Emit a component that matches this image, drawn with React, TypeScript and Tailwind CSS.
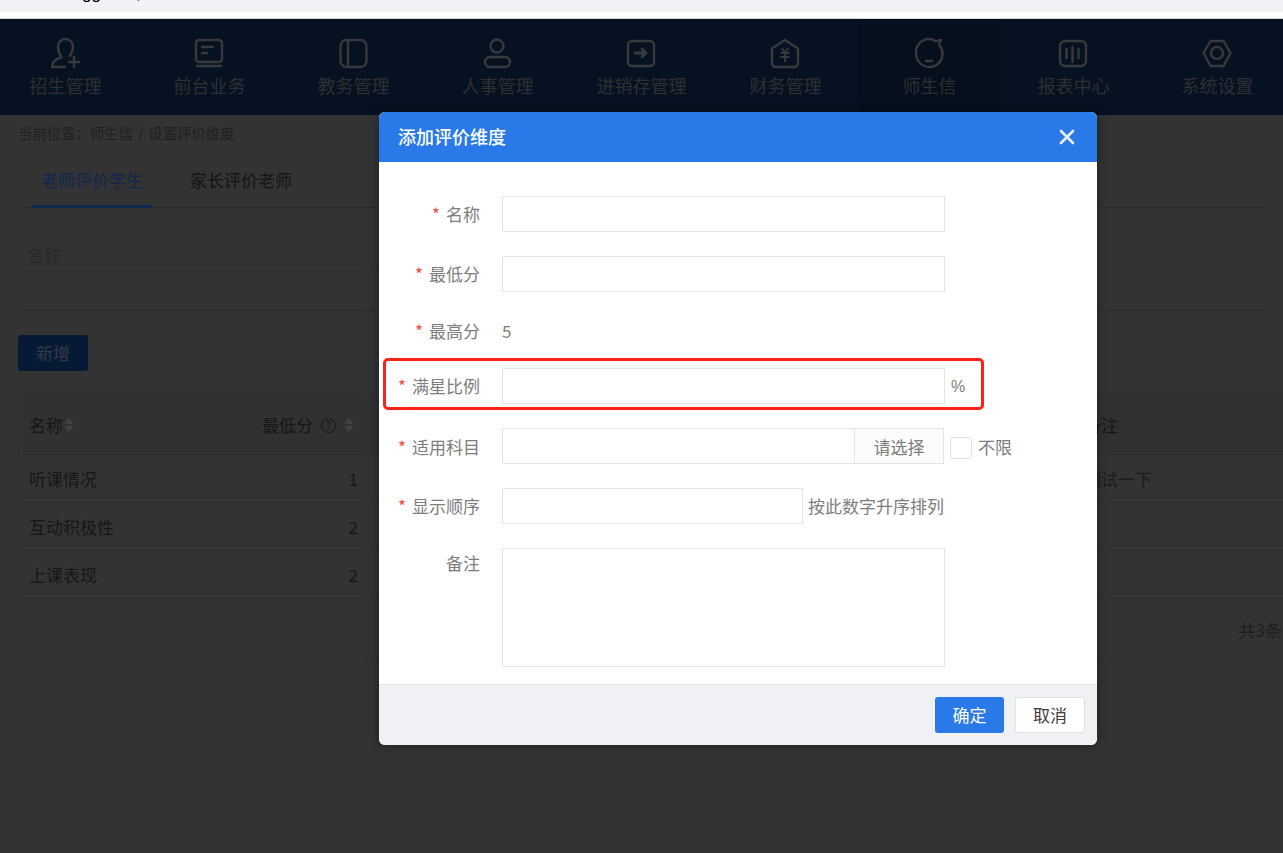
const font = { fontFamily: '"Noto Sans CJK SC", "Liberation Sans", sans-serif' };

const S = "fill-none stroke-[#38393b] stroke-[2.4]";
const B = "fill-none stroke-[#38393b] stroke-[2]";
const icons: Record<string, JSX.Element> = {
  a: (<g className={S} strokeLinecap="round" strokeLinejoin="round"><path d="M13 21C10.500 18 10 14.500 10 12 10 7.200 13 4 17.500 4S25 7.200 25 12c0 3-1 6-3 9" /><path d="M13 21v1.500C8 24 4 27 4 32h13" /><path d="M26 22v10M21 27h10" /></g>),
  b: (<g className={S} strokeLinecap="round" strokeLinejoin="round"><rect x="4" y="5" width="26" height="22" rx="3" /><path d="M10 12h11M10 18h5M5 31h24" /></g>),
  c: (<g className={S}><rect x="4.500" y="5" width="26" height="27" rx="6" /><path d="M12 5v27" /></g>),
  d: (<g className={S}><circle cx="17" cy="11" r="6.500" /><rect x="5" y="22" width="25" height="10" rx="5" /></g>),
  e: (<g strokeLinecap="round" strokeLinejoin="round"><rect x="4" y="6" width="26" height="25" rx="4" className={S} /><path d="M11 18h11M18 14l4 4-4 4" className="fill-none stroke-[#38393b] stroke-[2.800]" /></g>),
  f: (<g><path d="M17 5l13 8.500V28a4 4 0 0 1-4 4H8a4 4 0 0 1-4-4V13.500z" className={S} strokeLinejoin="round" /><path d="M13.500 13l3.500 4.500 3.500-4.500M12.500 18h9M12.500 22h9M17 17.500V27" className={B} /></g>),
  g: (<g className={S} strokeLinecap="round" strokeLinejoin="round"><path d="M27 9.500c2.500 3 3.500 6 3.500 9 0 7.500-5.500 13.500-13 13.500S4 26 4 18 9.500 4 17 4c2.500 0 5 .8 6.500 2.200L29 5z" /><path d="M14 26h6" /></g>),
  h: (<g className={S} strokeLinecap="round"><rect x="4" y="6" width="26" height="25" rx="5" /><path d="M10.500 14v9M16.500 12v15M22.500 14v9" /></g>),
  i: (<g className={S} strokeLinejoin="round"><path d="M10.500 6h13L30.500 18l-7 13h-13L3.500 18z" /><circle cx="17" cy="18" r="6" /></g>),
};

const nav: [string, string][] = [
  ["招生管理", "a"], ["前台业务", "b"], ["教务管理", "c"], ["人事管理", "d"], ["进销存管理", "e"],
  ["财务管理", "f"], ["师生信", "g"], ["报表中心", "h"], ["系统设置", "i"],
];

function Sort() {
  return (
    <span className="flex flex-col gap-[2px] ml-[1px]">
      <span className="w-0 h-0 border-x-[5px] border-x-transparent border-b-[6px] border-b-[#424242]" />
      <span className="w-0 h-0 border-x-[5px] border-x-transparent border-t-[6px] border-t-[#424242]" />
    </span>
  );
}

function Label({ text, req = true, mt = "" }: { text: string; req?: boolean; mt?: string }) {
  return (
    <div className={`w-[101px] shrink-0 text-right text-[17px] leading-[24px] text-[#7d7d7d] ${mt}`}>
      {req && <span className="text-[#f5483b] mr-[6px]">*</span>}
      {text}
    </div>
  );
}

const inputCls = "h-[36px] border border-[#e3e4e6] bg-white";

export default function App() {
  return (
    <div style={font} className="relative w-[1283px] h-[853px] overflow-hidden bg-[#333333]">
      <div className="h-[12px] bg-[#f0f2f5] overflow-hidden relative">
        <span className="absolute left-[82px] top-[-17px] text-[17px] leading-[22px] text-black font-['Liberation_Sans']">gg</span>
        <span className="absolute left-[136px] top-[-17px] text-[17px] leading-[22px] text-[#333] font-['Liberation_Sans']">,</span>
      </div>
      <div className="h-[7px] bg-white border-b border-[#d9d9d9]" />

      <nav className="h-[96px] bg-[#061222] flex justify-center">
        {nav.map(([t, k]) => (
          <div key={t} className={`w-[144px] h-[91px] shrink-0 flex flex-col items-center pt-[16px] ${t === "师生信" ? "bg-[#050f1d]" : ""}`}>
            <svg width="36" height="36" viewBox="0 0 36 36">{icons[k]}</svg>
            <span className="text-[18px] leading-[26px] mt-[1px] text-[#2e2f31]">{t}</span>
          </div>
        ))}
      </nav>

      <main className="px-[18px]">
        <div className="text-[14.4px] leading-[20px] pt-[8px] text-[#202020]">当前位置：师生信<span className="mx-[1.500px]"> / </span>设置评价维度</div>
        <div className="flex mt-[21px] h-[44px] border-b border-[#2b2b2b] pl-[14px] text-[17px]">
          <div className="w-[120px] h-[44px] text-center leading-[32px] text-[#10284f] border-b-[3px] border-[#10284f]">老师评价学生</div>
          <div className="w-[178px] text-center leading-[32px] text-[#141414]">家长评价老师</div>
        </div>
        <div className="h-[103px] border-b border-[#2b2b2b] pt-[30px] pl-[5px]">
          <div className="w-[360px] h-[34px] border-b border-[#2e2e2e] pl-[4px] text-[17px] leading-[34px] text-[#282828]">名称</div>
        </div>
        <button className="block mt-[24px] w-[70px] h-[36px] rounded-[3px] bg-[#061a36] text-[17px] text-[#333a44]">新增</button>

        <div className="mt-[24px] w-[1280px] h-[266px] border border-[#2d2d2d] text-[17px] text-[#161616]">
          <div className="h-[59px] bg-[#313131] border-b border-[#2d2d2d] flex items-center pl-[10px]">
            <div className="w-[233px] flex items-center">名称<Sort /></div>
            <div className="flex items-center">
              最低分
              <span className="ml-[8px] w-[15px] h-[15px] rounded-full border border-[#161616] text-[11px] leading-[13px] text-center">?</span>
              <span className="ml-[7px]"><Sort /></span>
            </div>
            <div className="ml-auto w-[213px]">备注</div>
          </div>
          {[["听课情况", "1", "测试一下"], ["互动积极性", "2", ""], ["上课表现", "2", ""]].map(([a, b, c]) => (
            <div key={a} className="h-[48px] border-b border-[#2d2d2d] flex items-center pl-[10px]">
              <div className="w-[319px]">{a}</div>
              <div className="w-[10px] text-right">{b}</div>
              <div className="ml-auto w-[213px] text-[#1c1c1c]">{c}</div>
            </div>
          ))}
          <div className="h-[62px] flex items-center justify-end text-[#1e1e1e] pr-[15px]">共3条</div>
        </div>
      </main>

      <div className="absolute left-[379px] top-[112px] w-[718px] h-[633px] rounded-[6px] overflow-hidden bg-white flex flex-col shadow-[0_0_12px_rgba(0,0,0,0.4)]">
        <div className="h-[50px] shrink-0 bg-[#2a79e8] flex items-center justify-between pl-[19px] pr-[22px] pb-[1px]">
          <span className="text-[18px] font-medium text-white">添加评价维度</span>
          <svg width="16" height="16" viewBox="0 0 16 16"><path d="M2 2l12 12M14 2L2 14" stroke="#e8f0fc" strokeWidth="2.600" strokeLinecap="round" /></svg>
        </div>

        <div className="flex-1 pt-[34px]">
          <div className="flex pb-[24px]">
            <Label text="名称" mt="mt-[6px]" />
            <div className={`${inputCls} w-[443px] ml-[22px]`} />
          </div>
          <div className="flex pb-[24px]">
            <Label text="最低分" mt="mt-[6px]" />
            <div className={`${inputCls} w-[443px] ml-[22px]`} />
          </div>
          <div className="flex h-[52px]">
            <Label text="最高分" mt="mt-[3px]" />
            <div className="ml-[22px] mt-[3px] text-[17px] leading-[24px] text-[#7d7d7d]">5</div>
          </div>
          <div className="flex pb-[24px]">
            <Label text="满星比例" mt="mt-[6px]" />
            <div className={`${inputCls} w-[443px] ml-[22px]`} />
            <span className="ml-[6px] text-base leading-[38px] h-[36px] text-[#7d7d7d] font-['Liberation_Sans']">%</span>
          </div>
          <div className="flex pb-[24px]">
            <Label text="适用科目" mt="mt-[7px]" />
            <div className={`${inputCls} w-[442px] ml-[22px] flex justify-end`}>
              <div className="w-[89px] bg-[#fcfcfc] border-l border-[#e3e4e6] text-center text-[17px] leading-[36px] text-[#7d7d7d]">请选择</div>
            </div>
            <span className="ml-[6px] mt-[9px] w-[22px] h-[22px] rounded-[3px] border border-[#dfe2e8]" />
            <span className="ml-[6px] text-[17px] leading-[38px] h-[36px] text-[#7d7d7d]">不限</span>
          </div>
          <div className="flex pb-[24px]">
            <Label text="显示顺序" mt="mt-[6px]" />
            <div className={`${inputCls} w-[301px] ml-[22px]`} />
            <span className="ml-[5px] text-[17px] leading-[36px] h-[36px] text-[#7d7d7d]">按此数字升序排列</span>
          </div>
          <div className="flex">
            <Label text="备注" req={false} mt="mt-[3px]" />
            <div className="h-[119px] w-[443px] ml-[22px] border border-[#e3e4e6]" />
          </div>
        </div>

        <div className="h-[61px] shrink-0 bg-[#f0f1f5] border-t border-[#e3e4e8] flex items-center justify-end gap-[11px] pr-[12px] pb-[1px]">
          <button className="w-[69px] h-[36px] rounded-[3px] bg-[#2a79e8] text-[17px] text-white">确定</button>
          <button className="w-[70px] h-[36px] rounded-[3px] bg-white border border-[#dfe1e6] text-[17px] text-[#3c3c3c]">取消</button>
        </div>
      </div>

      <div className="absolute left-[383px] top-[358px] w-[601px] h-[52px] rounded-[5px] border-[3px] border-[#fb2318]" />
    </div>
  );
}
